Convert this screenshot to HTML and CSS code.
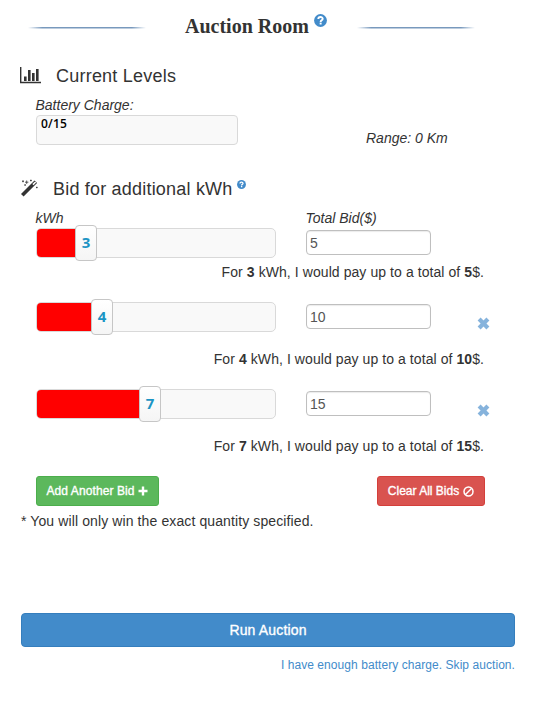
FILE: index.html
```html
<!DOCTYPE html>
<html lang="en">
<head>
<meta charset="utf-8">
<title>Auction Room</title>
<link rel="stylesheet" href="styles.css">
</head>
<body>
<svg width="0" height="0" class="defs" aria-hidden="true">
  <symbol id="help" viewBox="0 0 14 14"><circle cx="7" cy="7" r="6.900" fill="#428bca"/><path d="M4.600 5.500C4.600 2.500 9.400 2.600 9.400 5.200 9.400 6.800 7.100 6.800 7.100 8.500" fill="none" stroke="#fff" stroke-width="2"/><path d="M6.100 9.300h2.100v2h-2.100z" fill="#fff"/></symbol>
  <symbol id="remove" viewBox="0 0 13 13"><path d="M2.100 2.100 10.900 10.900M10.900 2.100 2.100 10.900" stroke="#86b3dc" stroke-width="4.200"/></symbol>
</svg>
<main class="page">
  <header class="header">
    <span class="rule"></span>
    <h1 class="title">Auction Room</h1>
    <svg class="title-help"><use href="#help"/></svg>
    <span class="rule rule-right"></span>
  </header>

  <section class="levels">
    <h2 class="heading">
      <svg class="chart" viewBox="0 0 22 17"><path d="M.7 0v15.500H21" fill="none" stroke="#333" stroke-width="1.400"/><path d="M4 9.500h2.600v4.500H4zM8 3h2.600v11H8zM12 6h2.600v8H12zM16 2h2.600v12H16z" fill="#333"/></svg>
      <span>Current Levels</span>
    </h2>
    <div class="charge-row">
      <div class="charge">
        <div class="label">Battery Charge:</div>
        <div class="battery">0/15</div>
      </div>
      <div class="range">Range: 0 Km</div>
    </div>
  </section>

  <section class="bids">
    <h2 class="heading heading-bid">
      <svg class="wand" viewBox="0 0 18 18"><path d="M1.300 16.300 14.800 2.800" stroke="#333" stroke-width="3.600"/><path d="m11.400 5.100 1.100 1.100 2.700-2.700-1.100-1.100z" fill="#fff"/><path d="M1 2.300h2M2 1.300v2M4 3.200h3.400M5.700 1.500v3.400M9 1.500h1.800M9.900.6v1.800M3.300 6h1.600M4.100 5.200v1.600M15 8.500h1.600M15.800 7.700v1.600" stroke="#333" stroke-width=".8"/></svg>
      <span>Bid for additional kWh</span>
      <svg class="heading-help"><use href="#help"/></svg>
    </h2>
    <div class="bid-labels"><span class="label">kWh</span><span class="label">Total Bid($)</span></div>

    <div class="bid bid-first">
      <div class="bid-controls">
        <div class="track"><div class="fill" style="width:40px"></div><div class="handle">3</div></div>
        <input class="amount" type="text" value="5" aria-label="Total bid">
      </div>
      <p class="summary">For <b>3</b> kWh, I would pay up to a total of <b>5</b>$.</p>
    </div>
    <div class="bid">
      <div class="bid-controls">
        <div class="track"><div class="fill" style="width:56px"></div><div class="handle">4</div></div>
        <input class="amount" type="text" value="10" aria-label="Total bid">
        <svg class="remove"><use href="#remove"/></svg>
      </div>
      <p class="summary">For <b>4</b> kWh, I would pay up to a total of <b>10</b>$.</p>
    </div>
    <div class="bid">
      <div class="bid-controls">
        <div class="track"><div class="fill" style="width:104px"></div><div class="handle">7</div></div>
        <input class="amount" type="text" value="15" aria-label="Total bid">
        <svg class="remove"><use href="#remove"/></svg>
      </div>
      <p class="summary">For <b>7</b> kWh, I would pay up to a total of <b>15</b>$.</p>
    </div>

    <div class="actions">
      <button class="btn add">Add Another Bid<svg width="10" height="10" viewBox="0 0 10 10"><path d="M5 .5v9M.5 5h9" stroke="#fff" stroke-width="2.400"/></svg></button>
      <button class="btn clear">Clear All Bids<svg width="11" height="11" viewBox="0 0 11 11"><circle cx="5.500" cy="5.500" r="4.500" fill="none" stroke="#fff" stroke-width="1.500"/><path d="M2.500 8.500l6-6" stroke="#fff" stroke-width="1.400"/></svg></button>
    </div>
    <p class="note">* You will only win the exact quantity specified.</p>
  </section>

  <button class="btn run">Run Auction</button>
  <a class="skip">I have enough battery charge. Skip auction.</a>
</main>
</body>
</html>
```
FILE: styles.css
```css
* { box-sizing: border-box; }
body { margin: 0; background: #fff; color: #333; font: 14px/20px "Liberation Sans", Arial, sans-serif; }
h1, h2, p { margin: 0; }
svg { display: block; flex: none; }
.defs { position: absolute; }
.page { width: 547px; height: 702px; padding: 0 32px 0 21px; overflow: hidden; }

.header { display: flex; height: 60px; padding-left: 7px; }
.rule { width: 118px; height: 2px; margin-top: 27px; background: linear-gradient(90deg, transparent, #7899bd 12%, #7899bd 88%, transparent); border-bottom: 1px solid rgba(255, 255, 255, .5); }
.title { width: 124px; margin: 14px 0 0 39px; font: bold 20px/25px "Liberation Serif", "Times New Roman", serif; white-space: nowrap; }
.title-help { width: 13px; height: 13px; margin: 14px 0 0 5px; }
.rule-right { margin-left: 30px; }

.heading { display: flex; align-items: center; height: 32px; font-size: 18px; font-weight: normal; letter-spacing: .22px; white-space: nowrap; }
.chart { width: 22px; height: 17px; margin: -1px 14px 0 -1px; }
.label { font-style: italic; margin-left: -.5px; }
.charge-row { display: flex; margin-top: 3px; padding-left: 15px; }
.charge { width: 202px; }
.battery { height: 30px; padding-left: 4px; border: 1px solid #d9d9d9; border-radius: 4px; background: #f9f9f9; color: #000; font: 600 12px/16px "Open Sans", sans-serif; letter-spacing: .2px; }
.range { margin: 33px 0 0 128px; font-style: italic; }

.heading-bid { margin-top: 25px; letter-spacing: .2px; }
.wand { width: 18px; height: 18px; margin: -3px 14px 0 0; }
.heading-help { width: 9px; height: 9px; margin: -9px 0 0 4px; }
.bid-labels { display: grid; grid-template-columns: 270px 1fr; margin-top: 3px; padding-left: 15px; }
.bid { margin-bottom: 20px; padding-left: 15px; }
.bid-controls { display: flex; height: 47px; }
.bid-first .bid-controls { height: 34px; }
.track { display: flex; width: 240px; height: 30px; border: 1px solid #d9d9d9; border-radius: 5px; background: #f9f9f9; }
.fill { flex: none; border-radius: 4px 0 0 4px; background: #f00; }
.handle { width: 22px; height: 36px; margin: -4px 0 0 -2px; border: 1px solid #c6c6c6; border-radius: 4px; background: linear-gradient(#fff, #f5f5f5); color: #1c94c4; font: bold 15px/33px "Open Sans", sans-serif; text-align: center; }
.amount { width: 125px; height: 25px; margin: 2px 0 0 30px; padding: 0 3px; border: 1px solid #bfbfbf; border-radius: 4px; background: #fff; box-shadow: inset 0 1px 1px rgba(0, 0, 0, .08); color: #555; font: 14px/20px "Liberation Sans", Arial, sans-serif; }
.remove { width: 13px; height: 13px; margin: 15px 0 0 46px; }
.summary { width: 448px; letter-spacing: .075px; text-align: right; white-space: nowrap; }

.actions { display: flex; justify-content: space-between; width: 464px; padding-left: 15px; }
.btn { display: flex; align-items: center; justify-content: center; gap: 4px; height: 30px; padding: 0; border: 1px solid; border-radius: 3px; color: #fff; font: 12px/18px "Liberation Sans", Arial, sans-serif; letter-spacing: .08px; -webkit-text-stroke: .35px #fff; white-space: nowrap; }
.add { width: 123px; background: #5cb85c; border-color: #4cae4c; }
.clear { width: 108px; background: #d9534f; border-color: #d43f3a; letter-spacing: 0; }
.note { margin-top: 5px; letter-spacing: .11px; }
.run { width: 494px; height: 34px; margin-top: 82px; border-color: #357ebd; border-radius: 4px; background: #428bca; font-size: 14px; letter-spacing: .15px; }
.skip { display: block; margin-top: 8px; color: #428bca; font-size: 12px; letter-spacing: .06px; text-align: right; }
```
